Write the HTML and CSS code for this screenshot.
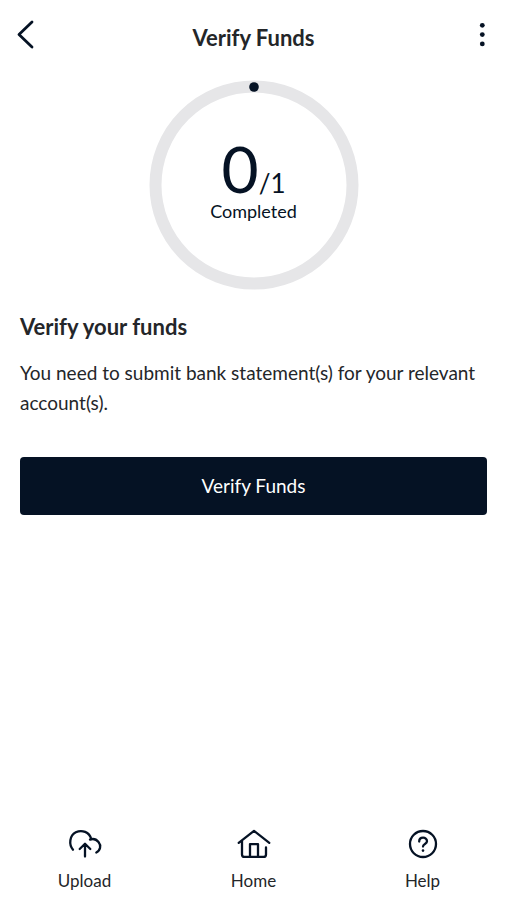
FILE: index.html
```html
<!DOCTYPE html>
<html lang="en">
<head>
<meta charset="utf-8">
<meta name="viewport" content="width=device-width, initial-scale=1">
<title>Verify Funds</title>
<link rel="stylesheet" href="styles.css">
</head>
<body>
<header class="topbar">
  <button class="icon-button" type="button" aria-label="Back">
    <svg width="20" height="32" viewBox="0 0 20 32"><path class="line thick" d="M17 4 4 16.500 17 29"/></svg>
  </button>
  <h1 class="title">Verify Funds</h1>
  <button class="icon-button" type="button" aria-label="More options">
    <svg width="20" height="32" viewBox="0 0 20 32"><g class="dot"><circle cx="10.300" cy="7.300" r="2.400"/><circle cx="10.300" cy="16.600" r="2.400"/><circle cx="10.300" cy="25.900" r="2.400"/></g></svg>
  </button>
</header>
<main class="content">
  <section class="progress" aria-label="Progress">
    <svg class="ring" viewBox="0 0 210 210" aria-hidden="true">
      <circle class="track" cx="105" cy="105" r="98.500"/>
      <circle class="dot" cx="105" cy="7" r="4.800"/>
    </svg>
    <div class="count">
      <p class="figures"><span class="done">0</span><span class="total">/1</span></p>
      <p class="caption">Completed</p>
    </div>
  </section>
  <h2 class="heading">Verify your funds</h2>
  <p class="text">You need to submit bank statement(s) for your relevant account(s).</p>
  <button class="primary" type="button">Verify Funds</button>
</main>
<nav class="tabs">
  <a class="tab" href="#upload">
    <svg width="36" height="36" viewBox="0 0 36 36"><path class="line" d="M6 23.700C1.500 18.500 2.600 9.500 8.800 6.300C15 3.300 22.300 6 24.300 13.200M23 13.600C26 12.500 29.300 13.300 31.500 16C34.500 19.600 33.400 24.500 29.300 26.500M18 30.600V18M12.700 23 18 17.800 23.300 23"/></svg>
    <span>Upload</span>
  </a>
  <a class="tab" href="#home">
    <svg width="36" height="36" viewBox="0 0 36 36"><path class="line" d="M2.700 16.800 18 4.900 33.300 16.800M6 14.900V28.400Q6 30.900 8.500 30.900H27.500Q30 30.900 30 28.400V21.400M14 30.900V18.100H22V30.900"/></svg>
    <span>Home</span>
  </a>
  <a class="tab" href="#help">
    <svg width="36" height="36" viewBox="0 0 36 36"><circle class="line" cx="18" cy="18" r="13"/><path class="line" d="M14.200 15.500C14.200 10.500 22 10.500 22 15.300C22 18.100 18 17.900 18 20.500"/><circle class="dot" cx="18" cy="24.600" r="1.300"/></svg>
    <span>Help</span>
  </a>
</nav>
</body>
</html>
```

FILE: styles.css
```css
* {
  box-sizing: border-box;
}

body {
  margin: 0;
  min-height: 100vh;
  display: flex;
  flex-direction: column;
  background: #fff;
  color: #242629;
  font-family: Lato, sans-serif;
}

h1, h2, p {
  margin: 0;
}

button {
  border: 0;
  font: inherit;
  cursor: pointer;
}

svg {
  display: block;
}

.line {
  fill: none;
  stroke: #051224;
  stroke-width: 2.3;
  stroke-linecap: round;
  stroke-linejoin: round;
}

.thick {
  stroke-width: 2.8;
}

.dot {
  fill: #051224;
}

.topbar {
  display: flex;
  align-items: center;
  justify-content: space-between;
  padding: 18px 15px 0;
}

.icon-button {
  padding: 0;
  background: none;
}

.title {
  padding-top: 8px;
  font-size: 22px;
  line-height: 24px;
}

.content {
  flex: 1;
  padding: 30px 20px;
}

.progress {
  display: grid;
  place-items: center;
}

.ring,
.count {
  grid-area: 1 / 1;
}

.ring {
  width: 210px;
}

.track {
  fill: none;
  stroke: #e6e6e8;
  stroke-width: 12;
}

.count {
  padding-bottom: 8px;
  color: #051224;
  text-align: center;
}

.figures {
  display: flex;
  align-items: baseline;
  justify-content: center;
  line-height: 60px;
}

.done {
  font-size: 64px;
}

.total {
  font-size: 26px;
  line-height: 30px;
}

.caption {
  font-size: 18px;
  line-height: 24px;
}

.heading {
  margin-top: 22px;
  font-size: 22px;
  line-height: 30px;
}

.text {
  margin-top: 16px;
  font-size: 19px;
  line-height: 30px;
}

.primary {
  display: block;
  width: 100%;
  margin-top: 39px;
  padding: 14px;
  border-radius: 4px;
  background: #051224;
  color: #fff;
  font-size: 19px;
  line-height: 30px;
}

.tabs {
  display: grid;
  grid-template-columns: repeat(3, 1fr);
  padding-bottom: 7px;
}

.tab {
  display: flex;
  flex-direction: column;
  align-items: center;
  gap: 7px;
  color: #242629;
  font-size: 17px;
  line-height: 24px;
  text-decoration: none;
}
```
